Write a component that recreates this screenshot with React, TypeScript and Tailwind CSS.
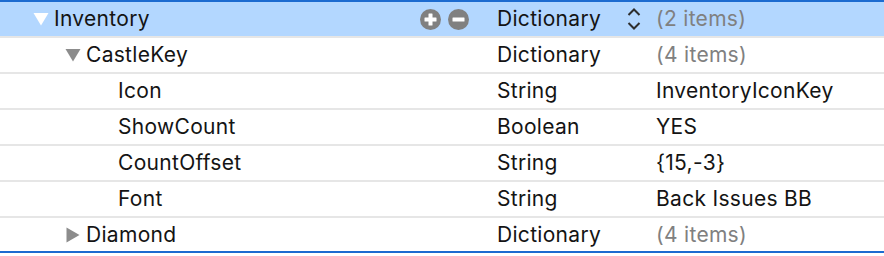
import React from "react";

type Row = {
  key: string;
  level: number;
  disclosure?: "open" | "closed";
  type: string;
  value: string;
  muted?: boolean;
  selected?: boolean;
};

const rows: Row[] = [
  { key: "Inventory", level: 0, disclosure: "open", type: "Dictionary", value: "(2 items)", muted: true, selected: true },
  { key: "CastleKey", level: 1, disclosure: "open", type: "Dictionary", value: "(4 items)", muted: true },
  { key: "Icon", level: 2, type: "String", value: "InventoryIconKey" },
  { key: "ShowCount", level: 2, type: "Boolean", value: "YES" },
  { key: "CountOffset", level: 2, type: "String", value: "{15,-3}" },
  { key: "Font", level: 2, type: "String", value: "Back Issues BB" },
  { key: "Diamond", level: 1, disclosure: "closed", type: "Dictionary", value: "(4 items)", muted: true },
];

function Disclosure({ kind, selected }: { kind: "open" | "closed"; selected?: boolean }) {
  const fill = selected ? "#ffffff" : "#8c8c8c";
  if (kind === "open") {
    return (
      <svg width="16" height="14" viewBox="0 0 16 14" className="shrink-0">
        <path d="M0.5 1 L15.5 1 L8 13.5 Z" fill={fill} />
      </svg>
    );
  }
  return (
    <svg width="16" height="16" viewBox="0 0 16 16" className="shrink-0">
      <path d="M1.5 0.5 L14.5 8 L1.5 15.5 Z" fill={fill} />
    </svg>
  );
}

function RoundButton({ plus }: { plus?: boolean }) {
  return (
    <svg width="21" height="21" viewBox="0 0 21 21">
      <circle cx="10.5" cy="10.5" r="10.5" fill="#808080" />
      <rect x="4.5" y="8.5" width="12" height="4" rx="0.5" fill="#ffffff" />
      {plus && <rect x="8.5" y="4.5" width="4" height="12" rx="0.5" fill="#ffffff" />}
    </svg>
  );
}

function Stepper() {
  return (
    <svg width="14" height="24" viewBox="0 0 14 24">
      <path d="M1.5 8 L7 2.5 L12.5 8" stroke="#2e2e2e" strokeWidth="2" fill="none" />
      <path d="M1.5 16 L7 21.5 L12.5 16" stroke="#2e2e2e" strokeWidth="2" fill="none" />
    </svg>
  );
}

export default function App() {
  return (
    <div
      className="w-[884px] h-[256px] bg-white overflow-hidden text-[21px] tracking-[0.3px] text-[#141414]"
      style={{ fontFamily: 'Inter, "Noto Sans", "Liberation Sans", sans-serif' }}
    >
      <div className="h-[2px] bg-[#1c6bd0]" />
      {rows.map((row, i) => {
        const last = i === rows.length - 1;
        return (
          <div
            key={row.key}
            className={`flex items-center box-content ${last ? "h-[33px]" : "h-[34px] border-b-2 border-[#e6e6e6]"} ${
              row.selected ? "bg-[#b3d7ff]" : "bg-white"
            }`}
          >
            {/* key column */}
            <div className="w-[497px] flex items-center shrink-0">
              <div
                className={`flex items-center ${
                  row.level === 0 ? "pl-[33px]" : row.level === 1 ? "pl-[65px]" : "pl-[118px]"
                }`}
              >
                {row.disclosure && (
                  <div className="w-[21px] flex items-center">
                    <Disclosure kind={row.disclosure} selected={row.selected} />
                  </div>
                )}
                <span>{row.key}</span>
              </div>
              {row.selected && (
                <div className="ml-auto mr-[28px] flex items-center gap-[7px]">
                  <RoundButton plus />
                  <RoundButton />
                </div>
              )}
            </div>
            {/* type column */}
            <div className="w-[159px] flex items-center shrink-0">
              <span>{row.type}</span>
              {row.selected && (
                <div className="ml-auto mr-[15px] flex items-center">
                  <Stepper />
                </div>
              )}
            </div>
            {/* value column */}
            <div className={`flex-1 ${row.muted ? "text-[#808080]" : ""}`}>{row.value}</div>
          </div>
        );
      })}
      <div className="h-[2px] bg-[#1c6bd0]" />
    </div>
  );
}
